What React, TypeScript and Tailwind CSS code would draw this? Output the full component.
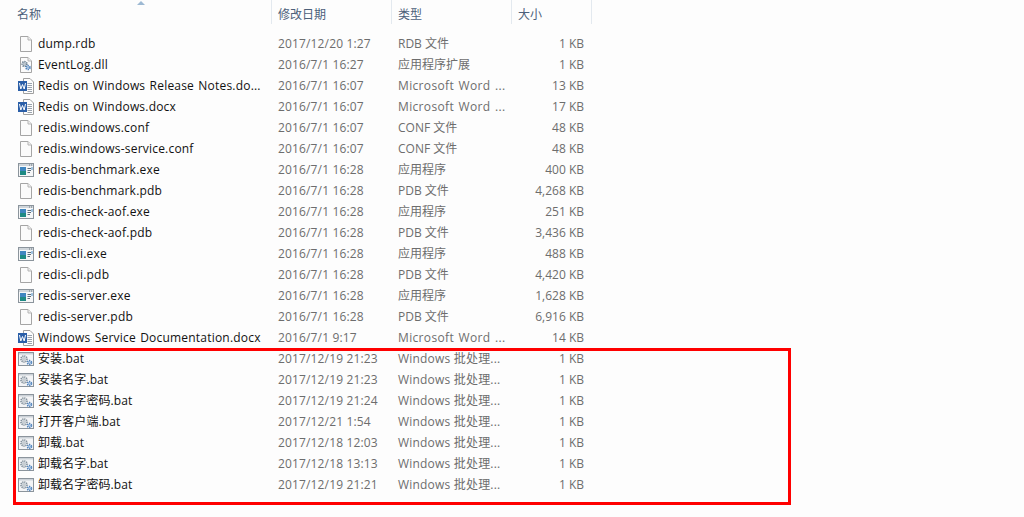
const files = [
  { name: "dump.rdb", date: "2017/12/20 1:27", type: "RDB 文件", size: "1 KB", icon: "file" },
  { name: "EventLog.dll", date: "2016/7/1 16:27", type: "应用程序扩展", size: "1 KB", icon: "dll" },
  { name: "Redis on Windows Release Notes.do...", date: "2016/7/1 16:07", type: "Microsoft Word ...", size: "13 KB", icon: "word" },
  { name: "Redis on Windows.docx", date: "2016/7/1 16:07", type: "Microsoft Word ...", size: "17 KB", icon: "word" },
  { name: "redis.windows.conf", date: "2016/7/1 16:07", type: "CONF 文件", size: "48 KB", icon: "file" },
  { name: "redis.windows-service.conf", date: "2016/7/1 16:07", type: "CONF 文件", size: "48 KB", icon: "file" },
  { name: "redis-benchmark.exe", date: "2016/7/1 16:28", type: "应用程序", size: "400 KB", icon: "exe" },
  { name: "redis-benchmark.pdb", date: "2016/7/1 16:28", type: "PDB 文件", size: "4,268 KB", icon: "file" },
  { name: "redis-check-aof.exe", date: "2016/7/1 16:28", type: "应用程序", size: "251 KB", icon: "exe" },
  { name: "redis-check-aof.pdb", date: "2016/7/1 16:28", type: "PDB 文件", size: "3,436 KB", icon: "file" },
  { name: "redis-cli.exe", date: "2016/7/1 16:28", type: "应用程序", size: "488 KB", icon: "exe" },
  { name: "redis-cli.pdb", date: "2016/7/1 16:28", type: "PDB 文件", size: "4,420 KB", icon: "file" },
  { name: "redis-server.exe", date: "2016/7/1 16:28", type: "应用程序", size: "1,628 KB", icon: "exe" },
  { name: "redis-server.pdb", date: "2016/7/1 16:28", type: "PDB 文件", size: "6,916 KB", icon: "file" },
  { name: "Windows Service Documentation.docx", date: "2016/7/1 9:17", type: "Microsoft Word ...", size: "14 KB", icon: "word" },
  { name: "安装.bat", date: "2017/12/19 21:23", type: "Windows 批处理...", size: "1 KB", icon: "bat" },
  { name: "安装名字.bat", date: "2017/12/19 21:23", type: "Windows 批处理...", size: "1 KB", icon: "bat" },
  { name: "安装名字密码.bat", date: "2017/12/19 21:24", type: "Windows 批处理...", size: "1 KB", icon: "bat" },
  { name: "打开客户端.bat", date: "2017/12/21 1:54", type: "Windows 批处理...", size: "1 KB", icon: "bat" },
  { name: "卸载.bat", date: "2017/12/18 12:03", type: "Windows 批处理...", size: "1 KB", icon: "bat" },
  { name: "卸载名字.bat", date: "2017/12/18 13:13", type: "Windows 批处理...", size: "1 KB", icon: "bat" },
  { name: "卸载名字密码.bat", date: "2017/12/19 21:21", type: "Windows 批处理...", size: "1 KB", icon: "bat" },
]

const BlankPage = () => (
  <>
    <path d="M2.5 0.5H10L13.5 4V15.5H2.5Z" fill="#fbfbfb" stroke="#a5a5a5" />
    <path d="M10 0.5V4H13.5" fill="#efefef" stroke="#b5b5b5" />
  </>
)

// small cog: ring with a dashed outer stroke for the teeth
const Gear = ({ x, y, r, color, fill }: { x: number; y: number; r: number; color: string; fill: string }) => (
  <>
    <circle cx={x} cy={y} r={r} fill={fill} stroke={color} strokeWidth="1.6" strokeDasharray="1.2 0.8" />
    <circle cx={x} cy={y} r={r * 0.4} fill="#fff" stroke={color} strokeWidth="0.6" />
  </>
)

const FileIcon = ({ icon }: { icon: string }) => {
  if (icon === "word") {
    return (
      <svg width="16" height="16" viewBox="0 0 16 16" className="shrink-0">
        <path d="M5.5 0.5H12L15.5 4V15.5H5.5Z" fill="#fdfdfd" stroke="#a0a0a0" />
        <path d="M9.5 5.5H14M9.5 7.5H14M9.5 9.5H14M9.5 11.5H14M9.5 13.5H14" stroke="#9aa3ad" />
        <rect x="0" y="3" width="9" height="10" fill="#2b5fa8" />
        <path d="M1.5 5L2.8 11L4.5 6.5L6.2 11L7.5 5" fill="none" stroke="#fff" strokeWidth="1" />
      </svg>
    )
  }
  if (icon === "exe") {
    return (
      <svg width="16" height="16" viewBox="0 0 16 16" className="shrink-0">
        <rect x="0.5" y="1.5" width="15" height="13" fill="#f6f7f8" stroke="#8b949c" />
        <rect x="1" y="2" width="14" height="2" fill="#cfd5da" />
        <path d="M11 3H12M13 3H14" stroke="#6b7680" />
        <rect x="2" y="5" width="6" height="8" fill="#1e8a84" />
        <rect x="2" y="5" width="6" height="4" fill="#3f86c0" />
        <path d="M9.5 6.5H13M9.5 8.5H13M9.5 10.5H12" stroke="#5c6e7c" />
        <rect x="13.5" y="5" width="1" height="3" fill="#4a8fc7" />
      </svg>
    )
  }
  if (icon === "bat") {
    return (
      <svg width="16" height="16" viewBox="0 0 16 16" className="shrink-0">
        <rect x="0.5" y="1.5" width="15" height="13" fill="#f3f4f6" stroke="#8b949c" />
        <rect x="1" y="2" width="14" height="1.5" fill="#cbd1d7" />
        <Gear x={6} y={8} r={3} color="#7f8d98" fill="#e4e9ed" />
        <Gear x={11.5} y={11.5} r={2} color="#4f83bd" fill="#dbe7f4" />
      </svg>
    )
  }
  if (icon === "dll") {
    return (
      <svg width="16" height="16" viewBox="0 0 16 16" className="shrink-0">
        <BlankPage />
        <Gear x={6.5} y={7} r={2.4} color="#6c7f8e" fill="#dbe4ec" />
        <Gear x={10} y={10.5} r={2} color="#4f83bd" fill="#d5e3f2" />
      </svg>
    )
  }
  return (
    <svg width="16" height="16" viewBox="0 0 16 16" className="shrink-0">
      <BlankPage />
    </svg>
  )
}

const App = () => {
  return (
    <div
      className="relative h-[517px] w-[1024px] overflow-hidden bg-[#fdfdfd] text-[12px]"
      style={{ fontFamily: '"Open Sans", "Noto Sans CJK SC", sans-serif' }}
    >
      <div className="absolute left-[137px] top-[1px] h-0 w-0 border-x-[4px] border-b-[4px] border-x-transparent border-b-[#9db9d3]" />

      <div className="flex h-[24px] text-[#4c607a]">
        <div className="flex w-[272px] items-center border-r border-[#e3e9ef] pl-[17px] pt-[6px]">名称</div>
        <div className="flex w-[120px] items-center border-r border-[#e3e9ef] pl-[6px] pt-[6px]">修改日期</div>
        <div className="flex w-[120px] items-center border-r border-[#e3e9ef] pl-[6px] pt-[6px]">类型</div>
        <div className="flex w-[80px] items-center border-r border-[#e3e9ef] pl-[6px] pt-[6px]">大小</div>
      </div>

      <div className="mt-[9px] flex flex-col">
        {files.map((file) => (
          <div key={file.name} className="flex h-[21px] items-center">
            <div className="flex w-[272px] items-center gap-[4px] pl-[18px] text-[#111111]">
              <FileIcon icon={file.icon} />
              <span
                className={
                  file.icon === "bat"
                    ? "whitespace-nowrap tracking-[0.1px]"
                    : "whitespace-nowrap tracking-[0.2px] [word-spacing:1px]"
                }
              >
                {file.name}
              </span>
            </div>
            <div className="w-[120px] pl-[6px] tracking-[0.15px] text-[#6d6d6d]">{file.date}</div>
            <div
              className={
                file.icon === "word"
                  ? "w-[120px] whitespace-nowrap pl-[6px] tracking-[0.35px] text-[#6d6d6d] [word-spacing:1px]"
                  : file.icon === "bat"
                    ? "w-[120px] whitespace-nowrap pl-[6px] tracking-[0.2px] text-[#6d6d6d]"
                    : "w-[120px] whitespace-nowrap pl-[6px] text-[#6d6d6d]"
              }
            >
              {file.type}
            </div>
            <div className="w-[80px] pr-[8px] text-right text-[#6d6d6d]">{file.size}</div>
          </div>
        ))}
      </div>

      <div className="absolute left-[13px] top-[348px] h-[157px] w-[778px] border-[3px] border-[#ff0000]" />
    </div>
  )
}

export default App
